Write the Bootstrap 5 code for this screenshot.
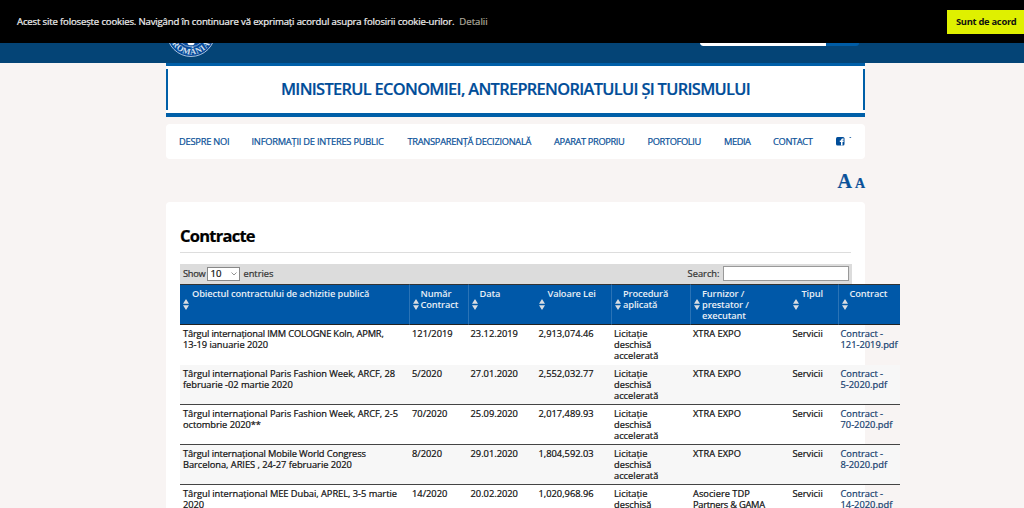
<!DOCTYPE html>
<html lang="ro">
<head>
<meta charset="utf-8">
<title>Contracte</title>
<link href="https://cdn.jsdelivr.net/npm/bootstrap@5.3.0/dist/css/bootstrap.min.css" rel="stylesheet">
<style>
body{background:#f8f4f3;font-family:"Open Sans","Noto Sans",sans-serif;font-size:9.3px;line-height:11px;color:#111;height:508px;overflow:hidden;font-weight:500;-webkit-text-stroke:.22px}
a{text-decoration:none}
.cookies{height:43px;background:#000;color:#eee;padding-left:17px;z-index:5;font-size:9.6px}
.cookies a{color:#aca89a;margin-left:5px}
.cookies .agree{background:#dff000;color:#111;width:77px;height:24px;padding-left:9px;line-height:24px;font-weight:700;font-size:9.4px;letter-spacing:-.3px;white-space:nowrap;-webkit-text-stroke:0}
.topbar{height:19.5px;background:#044476}
.wrap{width:699px;margin-left:166px}
.crest{left:1px;top:0;-webkit-text-stroke:0}
.find{left:534px;top:0;width:159px;height:3px;border-radius:0 0 4px 4px;overflow:hidden;background:#005ca5}
.find i{width:126px;height:3px;background:#fff;border-radius:0 0 0 4px}
.title-box{height:54px;background:#fff;border-top:3.5px solid #005fa8;border-bottom:4px solid #005fa8;padding:3px 0}
.title-box h1{border:solid #005fa8;border-width:0 2px;font-size:16.4px;font-weight:600;color:#004d99;line-height:40px;margin:0;letter-spacing:-.68px;height:41px}
.menu{height:35px;background:#fff;border-radius:4px;margin-top:7px;padding-left:13px}
.menu a{color:#0a5199;font-size:9.3px;letter-spacing:-.23px;padding-top:1px;white-space:nowrap;flex:none}
.sizes{height:43px;color:#0a5199;font-family:"Liberation Serif",serif;font-weight:700}
.panel{background:#fff;border-radius:4px 4px 0 0;height:330px;padding:0 14px}
.panel h2{font-size:16.5px;font-weight:700;line-height:20px;margin:0;padding-top:24px;height:50px;color:#000;letter-spacing:-.75px}
.rule{border-top:1px solid #ddd;height:12px}
.tools{height:20px;background:#dcdcdc;color:#333;padding:0 3px 0 3px;width:671.5px}
.len{width:33px;height:14px;border:1px solid #888;background:#fff;padding:0 2px;margin:0 3px 0 2px;color:#111;font-size:9.6px;line-height:12px}
.q{width:126px;height:15px;border:1px solid #999;background:#fff;margin-left:3px}
.grid-t{table-layout:fixed;width:720px;border-collapse:separate;border-spacing:0}
.grid-t th{height:41px;background:#0058a8;color:#e8eff6;font-weight:600;letter-spacing:-.14px;vertical-align:top;padding:3.5px 0 0 12px;border-top:1px solid #333;border-bottom:1px solid #222;position:relative;white-space:nowrap;-webkit-text-stroke:0}
.grid-t th.ln{border-left:1px solid #2a73b6;padding-left:11px}
.grid-t th svg{position:absolute;left:3px;top:14px}
.grid-t td{height:40px;padding:3px 0 0 3px;vertical-align:top;border-bottom:1px solid #444;white-space:nowrap}
.grid-t td:first-child{letter-spacing:-.04px}
.grid-t td:nth-child(2){padding-left:3.5px}
.grid-t tr.first td{border-color:transparent}
.grid-t tr.alt td{background:#f7f7f7}
.grid-t td a{color:#17416f}
</style>
<script src="https://cdn.jsdelivr.net/npm/bootstrap@5.3.0/dist/js/bootstrap.bundle.min.js"></script>
</head>
<body>
<svg class="d-none"><symbol id="sort" viewBox="0 0 6 11"><path d="M0 4.700 3 0l3 4.700zM0 6.200h6L3 11z" fill="#d8dde2"/></symbol></svg>
<div class="cookies d-flex align-items-center justify-content-between">
<div><span style="letter-spacing:-.165px">Acest site folosește cookies. Navigând în continuare vă exprimați acordul asupra folosirii cookie-urilor.</span><a href="#">Detalii</a></div>
<a href="#" class="agree">Sunt de acord</a>
</div>
<header class="topbar">
<div class="wrap position-relative">
<svg class="crest position-absolute" width="48" height="15" viewBox="0 43 48 15"><circle cx="24" cy="32.500" r="24" fill="#07499a" stroke="#a9c1dc" stroke-width="1"/><circle cx="24" cy="32.500" r="14.300" fill="none" stroke="#a9c1dc" stroke-width=".8"/><ellipse cx="24" cy="43" rx="3.500" ry="2.300" fill="#fff"/><path id="arc" d="M2 32.500a22 22 0 0 0 44 0" fill="none"/><text font-family="Liberation Serif" font-size="8.500" font-weight="700" fill="#d4e0ec" text-anchor="middle" letter-spacing=".5"><textPath href="#arc" startOffset="50%">ROMÂNIA</textPath></text></svg>
<div class="find position-absolute"><i class="d-block"></i></div>
</div>
</header>
<main class="wrap">
<div class="title-box"><h1 class="text-center">MINISTERUL ECONOMIEI, ANTREPRENORIATULUI ȘI TURISMULUI</h1></div>
<nav class="menu d-flex align-items-center">
<a href="#" style="width:72.500px">DESPRE NOI</a><a href="#" style="width:156px">INFORMAȚII DE INTERES PUBLIC</a><a href="#" style="width:146.500px;letter-spacing:-.3px">TRANSPARENȚĂ DECIZIONALĂ</a><a href="#" style="width:93.500px;letter-spacing:-.38px">APARAT PROPRIU</a><a href="#" style="width:76.500px;letter-spacing:-.38px">PORTOFOLIU</a><a href="#" style="width:49px;letter-spacing:-.45px">MEDIA</a><a href="#" style="width:62.500px;letter-spacing:-.35px">CONTACT</a>
<svg width="16" height="12" viewBox="0 0 16 12"><rect y="2" width="8.500" height="8.500" rx="1.500" fill="#004d99"/><path d="M5 10.500V7H3.800V5.600H5c0-1.800.8-2.300 2.700-2.100v1.200c-1-.1-1.200.1-1.200.9h1.200L7.500 7h-1v3.500z" fill="#fff"/><path d="M13 2h2.500l-1.200 1z" fill="#0a5199"/></svg>
</nav>
<div class="sizes d-flex justify-content-end align-items-baseline gap-1"><span style="font-size:20px;line-height:44px">A</span><span style="font-size:14px;margin-left:-1px">A</span></div>
<section class="panel">
<h2>Contracte</h2>
<div class="rule"></div>
<div class="tools d-flex align-items-center"><span style="letter-spacing:-.3px">Show</span><span class="len d-flex justify-content-between align-items-center">10<svg width="6" height="4"><path d="m.5.5 2.500 2.500L5.500.5" fill="none" stroke="#777" stroke-width=".8"/></svg></span><span>entries</span><span class="ms-auto">Search:</span><span class="q"></span></div>
<table class="grid-t">
<colgroup><col style="width:228.500px"><col style="width:59px"><col style="width:68px"><col style="width:75.500px"><col style="width:79px"><col style="width:99.500px"><col style="width:48px"><col style="width:62.500px"></colgroup>
<thead><tr>
<th><svg width="6" height="11"><use href="#sort"/></svg>Obiectul contractului de achizitie publică</th>
<th class="ln"><svg width="6" height="11"><use href="#sort"/></svg>Număr<br>Contract</th>
<th class="ln"><svg width="6" height="11"><use href="#sort"/></svg>Data</th>
<th><svg width="6" height="11"><use href="#sort"/></svg>Valoare Lei</th>
<th class="ln"><svg width="6" height="11"><use href="#sort"/></svg>Procedură<br>aplicată</th>
<th class="ln"><svg width="6" height="11"><use href="#sort"/></svg>Furnizor /<br>prestator /<br>executant</th>
<th><svg width="6" height="11"><use href="#sort"/></svg>Tipul</th>
<th class="ln"><svg width="6" height="11"><use href="#sort"/></svg>Contract</th>
</tr></thead>
<tbody>
<tr class="first"><td><span style="letter-spacing:-.17px">Târgul internațional IMM COLOGNE Koln, APMR,</span><br>13-19 ianuarie 2020</td><td>121/2019</td><td>23.12.2019</td><td>2,913,074.46</td><td>Licitație<br>deschisă<br>accelerată</td><td>XTRA EXPO</td><td>Servicii</td><td><a href="#">Contract -<br>121-2019.pdf</a></td></tr>
<tr class="alt"><td>Târgul internațional Paris Fashion Week, ARCF, 28<br>februarie -02 martie 2020</td><td>5/2020</td><td>27.01.2020</td><td>2,552,032.77</td><td>Licitație<br>deschisă<br>accelerată</td><td>XTRA EXPO</td><td>Servicii</td><td><a href="#">Contract -<br>5-2020.pdf</a></td></tr>
<tr><td>Târgul internațional Paris Fashion Week, ARCF, 2-5<br>octombrie 2020**</td><td>70/2020</td><td>25.09.2020</td><td>2,017,489.93</td><td>Licitație<br>deschisă<br>accelerată</td><td>XTRA EXPO</td><td>Servicii</td><td><a href="#">Contract -<br>70-2020.pdf</a></td></tr>
<tr class="alt"><td><span style="letter-spacing:-.13px">Târgul internațional Mobile World Congress</span><br>Barcelona, ARIES , 24-27 februarie 2020</td><td>8/2020</td><td>29.01.2020</td><td>1,804,592.03</td><td>Licitație<br>deschisă<br>accelerată</td><td>XTRA EXPO</td><td>Servicii</td><td><a href="#">Contract -<br>8-2020.pdf</a></td></tr>
<tr><td>Târgul internațional MEE Dubai, APREL, 3-5 martie<br>2020</td><td>14/2020</td><td>20.02.2020</td><td>1,020,968.96</td><td>Licitație<br>deschisă<br>accelerată</td><td>Asociere TDP<br><span style="letter-spacing:-.25px">Partners &amp; GAMA</span></td><td>Servicii</td><td><a href="#">Contract -<br>14-2020.pdf</a></td></tr>
</tbody></table>
</section>
</main>
</body>
</html>
